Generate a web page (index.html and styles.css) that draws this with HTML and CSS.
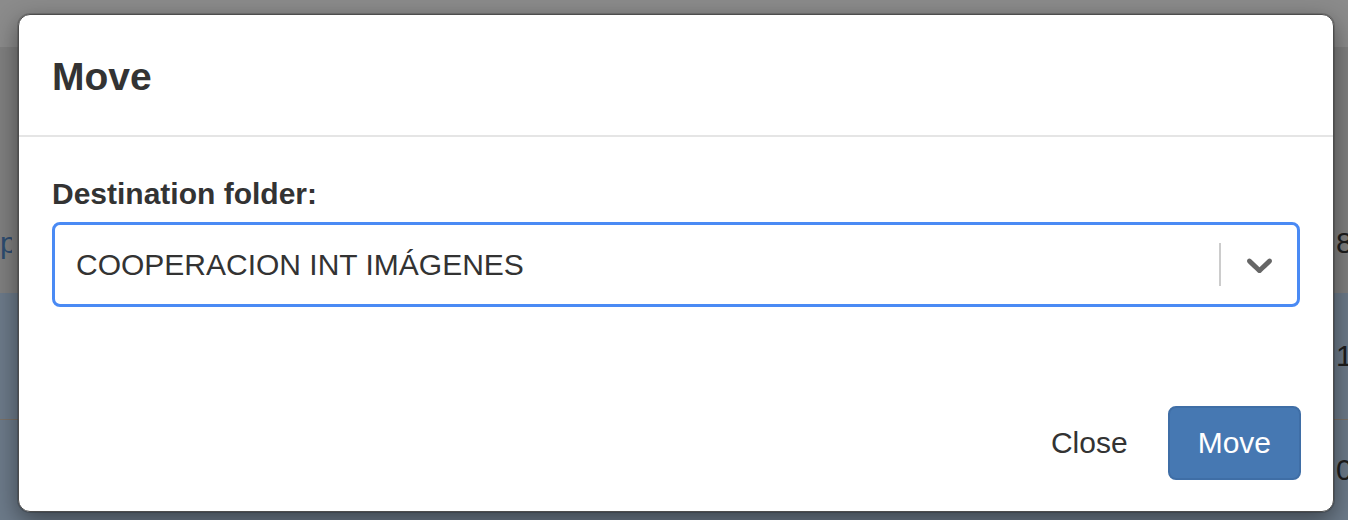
FILE: index.html
```html
<!DOCTYPE html>
<html>

<head>
  <title>Move</title>
  <link rel="stylesheet" href="styles.css">
</head>

<body>
  <div class="page">
    <div class="topbar"></div>
    <div class="row row-first">
      <span class="cell-left">p</span>
      <span class="cell-right">8</span>
    </div>
    <div class="row row-active row-split">
      <span class="cell-left"></span>
      <span class="cell-right">1</span>
    </div>
    <div class="row row-active row-last">
      <span class="cell-left"></span>
      <span class="cell-right">0</span>
    </div>
  </div>

  <div class="modal">
    <div class="modal-header">
      <h4 class="modal-title">Move</h4>
    </div>

    <div class="modal-body">
      <label class="field-label">Destination folder:</label>
      <div class="select-control">
        <div class="select-value">COOPERACION INT IMÁGENES</div>
        <span class="select-separator"></span>
        <div class="select-indicator">
          <svg width="43" height="43" viewBox="0 0 20 20">
            <path fill="#666" d="M4.516 7.548c0.436-0.446 1.043-0.481 1.576 0l3.908 3.747 3.908-3.747c0.533-0.481 1.141-0.446 1.574 0 0.436 0.445 0.408 1.197 0 1.615-0.406 0.418-4.695 4.502-4.695 4.502-0.217 0.223-0.502 0.335-0.787 0.335s-0.57-0.112-0.789-0.335c0 0-4.287-4.084-4.695-4.502s-0.436-1.17 0-1.615z"/>
          </svg>
        </div>
      </div>
    </div>

    <div class="modal-footer">
      <button class="btn btn-link">Close</button>
      <button class="btn btn-primary">Move</button>
    </div>
  </div>
</body>

</html>
```

FILE: styles.css
```css
body {
  margin: 0;
  font-family: "Liberation Sans", Arial, sans-serif;
  color: #333;
  overflow: hidden;
}

.page {
  height: 520px;
  display: flex;
  flex-direction: column;
  background: #7f7f7f;
}

.topbar {
  height: 47px;
  background: #8b8b8b;
}

.row {
  display: flex;
  justify-content: space-between;
  align-items: center;
  font-size: 30px;
  color: #1d1d1d;
}

.row-first {
  height: 246px;
  box-sizing: border-box;
  align-items: flex-end;
  padding-bottom: 33px;
}

.row-active {
  background: #6c7a89;
}

.row-split {
  height: 126px;
  border-bottom: 1px solid #7a7168;
}

.row-last {
  flex: 1;
}

.cell-left {
  width: 12px;
  color: #2d4c70;
  overflow: hidden;
  text-align: right;
}

.cell-right {
  width: 12px;
  overflow: hidden;
}

.modal {
  position: absolute;
  left: 18px;
  top: 14px;
  width: 1316px;
  height: 498px;
  box-sizing: border-box;
  display: flex;
  flex-direction: column;
  background: #fff;
  border: 1px solid #4d4d4d;
  border-radius: 12px;
  box-shadow: 0 0 0 1px rgba(0, 0, 0, 0.15), 0 8px 24px rgba(0, 0, 0, 0.45);
}

.modal-header {
  padding: 34px 33px 31px;
  border-bottom: 2px solid #e5e5e5;
}

.modal-title {
  margin: 0;
  font-size: 39px;
  line-height: 55px;
  font-weight: bold;
}

.modal-body {
  padding: 35px 33px 0;
}

.field-label {
  display: block;
  margin-bottom: 7px;
  font-size: 30px;
  line-height: 43px;
  font-weight: bold;
}

.select-control {
  display: flex;
  align-items: center;
  height: 85px;
  box-sizing: border-box;
  border: 3px solid #4a8af4;
  border-radius: 8px;
}

.select-value {
  flex: 1;
  padding-left: 21px;
  font-size: 30px;
  color: #333;
}

.select-separator {
  align-self: stretch;
  width: 2px;
  margin: 18px 0;
  background: #ccc;
}

.select-indicator {
  display: flex;
  padding: 0 16px 0 17px;
}

.modal-footer {
  margin-top: auto;
  display: flex;
  justify-content: flex-end;
  align-items: center;
  gap: 10px;
  padding: 0 32px 31px;
}

.btn {
  font-family: inherit;
  font-size: 30px;
  line-height: 42px;
  padding: 14px 28px;
  border: 2px solid transparent;
  border-radius: 8px;
}

.btn-link {
  background: none;
  color: #333;
}

.btn-primary {
  background: #4678b2;
  border-color: #3f6ea6;
  color: #fff;
}
```
